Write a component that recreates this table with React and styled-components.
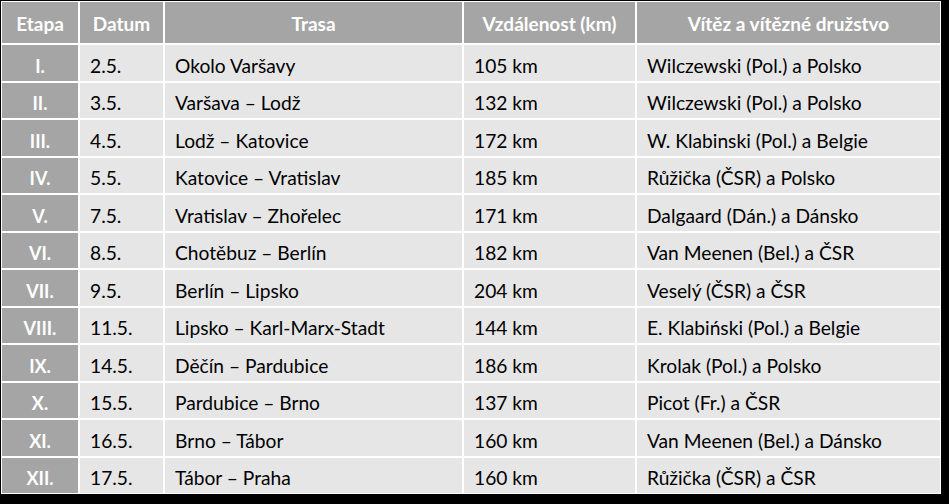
import styled, { createGlobalStyle } from "styled-components";

const GlobalStyle = createGlobalStyle`
  html, body {
    margin: 0;
    padding: 0;
    background: #000;
  }
  body {
    font-family: Lato, "Open Sans", "Liberation Sans", sans-serif;
  }
`;

const stages = [
  ["I.", "2.5.", "Okolo Varšavy", "105 km", "Wilczewski (Pol.) a Polsko"],
  ["II.", "3.5.", "Varšava – Lodž", "132 km", "Wilczewski (Pol.) a Polsko"],
  ["III.", "4.5.", "Lodž – Katovice", "172 km", "W. Klabinski (Pol.) a Belgie"],
  ["IV.", "5.5.", "Katovice – Vratislav", "185 km", "Růžička (ČSR) a Polsko"],
  ["V.", "7.5.", "Vratislav – Zhořelec", "171 km", "Dalgaard (Dán.) a Dánsko"],
  ["VI.", "8.5.", "Chotěbuz – Berlín", "182 km", "Van Meenen (Bel.) a ČSR"],
  ["VII.", "9.5.", "Berlín – Lipsko", "204 km", "Veselý (ČSR) a ČSR"],
  ["VIII.", "11.5.", "Lipsko – Karl-Marx-Stadt", "144 km", "E. Klabiński (Pol.) a Belgie"],
  ["IX.", "14.5.", "Děčín – Pardubice", "186 km", "Krolak (Pol.) a Polsko"],
  ["X.", "15.5.", "Pardubice – Brno", "137 km", "Picot (Fr.) a ČSR"],
  ["XI.", "16.5.", "Brno – Tábor", "160 km", "Van Meenen (Bel.) a Dánsko"],
  ["XII.", "17.5.", "Tábor – Praha", "160 km", "Růžička (ČSR) a ČSR"],
];

const headers = ["Etapa", "Datum", "Trasa", "Vzdálenost (km)", "Vítěz a vítězné družstvo"];

export default function App() {
  return (
    <>
      <GlobalStyle />
      <Frame>
        <Table>
          {headers.map((h) => (
            <HeadCell key={h}>{h}</HeadCell>
          ))}
          {stages.map(([stage, ...rest]) => (
            <Row key={stage} stage={stage} cells={rest} />
          ))}
        </Table>
      </Frame>
    </>
  );
}

const Row = ({ stage, cells }) => (
  <>
    <StageCell>{stage}</StageCell>
    {cells.map((c, i) => (
      <Cell key={i}>{c}</Cell>
    ))}
  </>
);

const Frame = styled.div`
  padding: 1px 0 0 1px;
`;

const Table = styled.div`
  display: grid;
  width: 940px;
  box-sizing: border-box;
  grid-template-columns: 76px 83px 297px 171px 303px;
  grid-template-rows: 41px;
  grid-auto-rows: 35.5px;
  gap: 2px;
  padding: 1px;
  background: #ffffff;
`;

const HeadCell = styled.div`
  display: flex;
  align-items: center;
  justify-content: center;
  box-sizing: border-box;
  padding-top: 2px;
  background: #a5a5a5;
  color: #ffffff;
  font-weight: 700;
  font-size: 19px;
  white-space: nowrap;
`;

const StageCell = styled.div`
  display: flex;
  align-items: center;
  justify-content: center;
  box-sizing: border-box;
  padding-top: 6px;
  background: #a5a5a5;
  color: #ffffff;
  font-weight: 700;
  font-size: 18px;
`;

const Cell = styled.div`
  display: flex;
  align-items: center;
  box-sizing: border-box;
  padding: 5px 0 0 10px;
  background: #e6e6e6;
  color: #000000;
  font-size: 19.2px;
  white-space: nowrap;
`;
